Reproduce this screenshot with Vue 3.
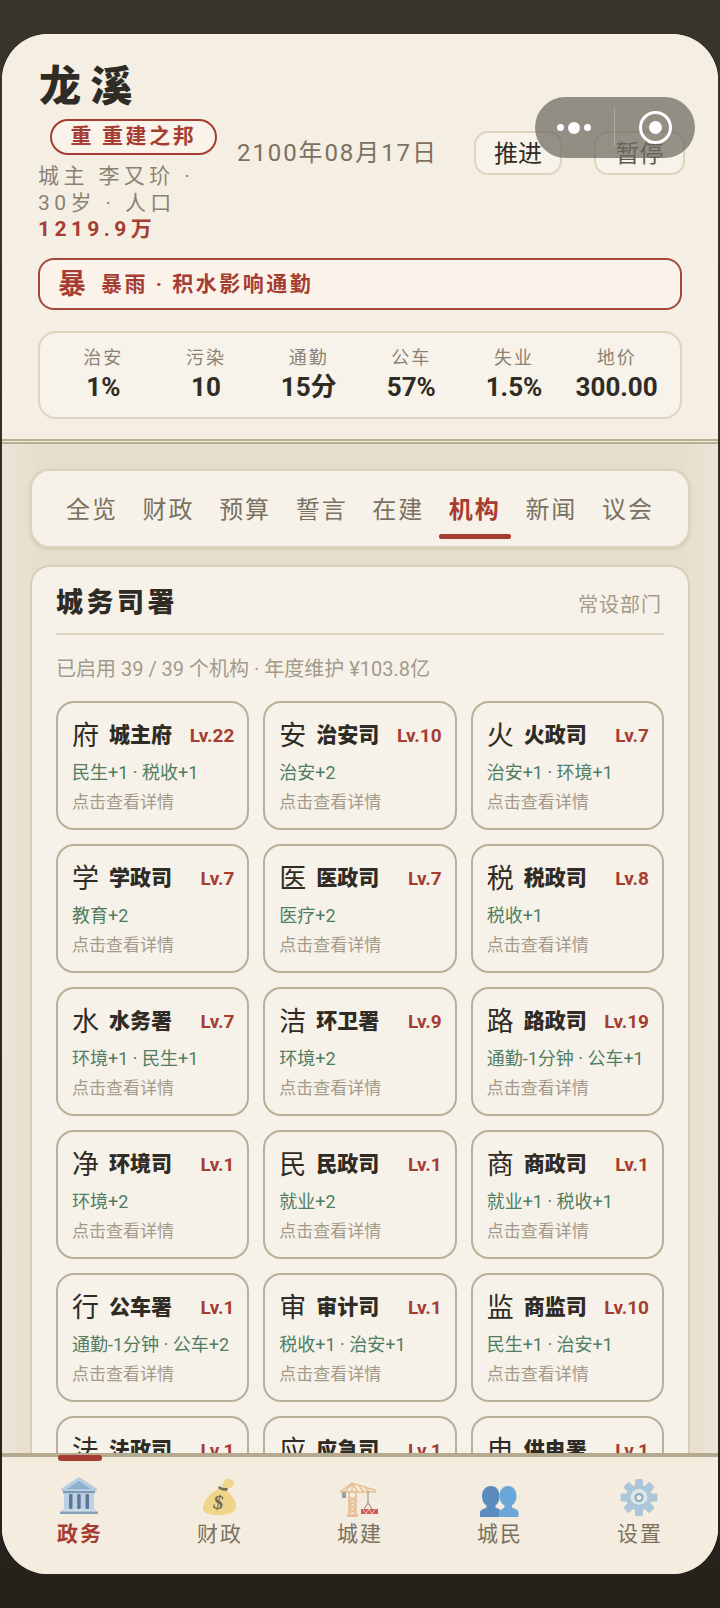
<script setup>
const stats = [
  ['治安', '1%'], ['污染', '10'], ['通勤', '15分'], ['公车', '57%'], ['失业', '1.5%'], ['地价', '300.00']
]
const tabs = ['全览', '财政', '预算', '誓言', '在建', '机构', '新闻', '议会']
const orgs = [
  ['府', '城主府', 'Lv.22', '民生+1 · 税收+1'],
  ['安', '治安司', 'Lv.10', '治安+2'],
  ['火', '火政司', 'Lv.7', '治安+1 · 环境+1'],
  ['学', '学政司', 'Lv.7', '教育+2'],
  ['医', '医政司', 'Lv.7', '医疗+2'],
  ['税', '税政司', 'Lv.8', '税收+1'],
  ['水', '水务署', 'Lv.7', '环境+1 · 民生+1'],
  ['洁', '环卫署', 'Lv.9', '环境+2'],
  ['路', '路政司', 'Lv.19', '通勤-1分钟 · 公车+1'],
  ['净', '环境司', 'Lv.1', '环境+2'],
  ['民', '民政司', 'Lv.1', '就业+2'],
  ['商', '商政司', 'Lv.1', '就业+1 · 税收+1'],
  ['行', '公车署', 'Lv.1', '通勤-1分钟 · 公车+2'],
  ['审', '审计司', 'Lv.1', '税收+1 · 治安+1'],
  ['监', '商监司', 'Lv.10', '民生+1 · 治安+1'],
  ['法', '法政司', 'Lv.1', ''],
  ['应', '应急司', 'Lv.1', ''],
  ['电', '供电署', 'Lv.1', '']
]
</script>

<template>
  <div class="page">
    <div class="frame">
      <header class="head">
        <h1 class="city">龙溪</h1>
        <div class="row2">
          <div class="left">
            <div class="pill">重 重建之邦</div>
            <div class="owner">城主 李又玠 ·</div>
            <div class="owner">30岁 · 人口</div>
            <div class="owner pop">1219.9万</div>
          </div>
          <div class="date">2100年08月17日</div>
          <button class="btn go">推进</button>
          <button class="btn pause">暂停</button>
        </div>
        <div class="alert"><span class="alert-mark">暴</span><span class="alert-text">暴雨 · 积水影响通勤</span></div>
        <div class="stats">
          <div v-for="s in stats" :key="s[0]" class="stat">
            <div class="stat-label">{{ s[0] }}</div>
            <div class="stat-value">{{ s[1] }}</div>
          </div>
        </div>
      </header>

      <main class="main">
        <nav class="tabs">
          <div v-for="t in tabs" :key="t" class="tab" :class="{ on: t === '机构' }">{{ t }}</div>
        </nav>
        <section class="panel">
          <div class="panel-head">
            <h2 class="panel-title">城务司署</h2>
            <span class="panel-note">常设部门</span>
          </div>
          <div class="summary">已启用 39 / 39 个机构 · 年度维护 ¥103.8亿</div>
          <div class="grid">
            <div v-for="o in orgs" :key="o[0]" class="org">
              <div class="org-head">
                <span class="org-mark">{{ o[0] }}</span>
                <span class="org-name">{{ o[1] }}</span>
                <span class="org-lv">{{ o[2] }}</span>
              </div>
              <template v-if="o[3]">
                <div class="org-effect">{{ o[3] }}</div>
                <div class="org-hint">点击查看详情</div>
              </template>
            </div>
          </div>
        </section>
      </main>

      <footer class="nav">
        <div class="nav-item active">
          <span class="nav-bar"></span>
          <svg class="ico" viewBox="0 0 40 40">
            <polygon points="20,0 38,12 38,14 2,14 2,12" fill="#b5cce3"/>
            <polygon points="20,4 32,12 8,12" fill="#8fadcd"/>
            <rect x="4" y="14" width="32" height="2.500" fill="#7f9ab6"/>
            <rect x="5" y="16.500" width="30" height="15.500" fill="#bcd1e6"/>
            <rect x="10" y="17" width="3.500" height="15" rx="1" fill="#5d7894"/>
            <rect x="18.200" y="17" width="3.500" height="15" rx="1" fill="#5d7894"/>
            <rect x="26.500" y="17" width="3.500" height="15" rx="1" fill="#5d7894"/>
            <rect x="3" y="32" width="34" height="2.500" fill="#cddcea"/>
            <rect x="1" y="34.500" width="38" height="2.500" fill="#86a1bc"/>
          </svg>
          <span class="nav-label">政务</span>
        </div>
        <div class="nav-item">
          <svg class="ico" viewBox="0 0 40 40">
            <path d="M22 11C12 14 4 24 4 31c0 5 6 7 15 7s18-2 18-8c0-8-7-16-15-19z" fill="#efd58a"/>
            <path d="M22 8c3-1 3-4 4-6 2 1 3 0 4-1 1 2 3 2 5 3-1 2 0 4-1 5-2 2-6 3-8 2z" fill="#efd58a"/>
            <path d="M20 9c3 2 6 2 9 2l-1 3c-4 0-7-1-9-3z" fill="#7b6a55"/>
            <text x="19.500" y="32" text-anchor="middle" class="dollar" transform="rotate(12 20 26)">$</text>
          </svg>
          <span class="nav-label">财政</span>
        </div>
        <div class="nav-item">
          <svg class="ico" viewBox="0 0 40 40">
            <g fill="none" stroke="#e6c092" stroke-width="1.500">
              <path d="M1 15L13 6l24 7.500M1 15h36M13 6v9M6 15l7-9M19 15l-6-9M25 15l-5-6M31 15l-5-4"/>
              <path d="M10 15h7v24h-7zM10 20l7 4-7 4 7 4-7 4M17 20l-7 4 7 4-7 4 7 4"/>
            </g>
            <rect x="8" y="37" width="11" height="3" fill="#e6c092"/>
            <rect x="3" y="15" width="4" height="6" fill="#94a0ad"/>
            <path d="M29 14v12" stroke="#a8a898" stroke-width="1.400"/>
            <path d="M29 26l-4 6M29 26l4 6" stroke="#a87a70" stroke-width="1"/>
            <rect x="22" y="32" width="17" height="5" fill="#cc5a55"/>
            <path d="M24 32l3 5 3-5 3 5 3-5" stroke="#eebdb0" stroke-width="1" fill="none"/>
          </svg>
          <span class="nav-label">城建</span>
        </div>
        <div class="nav-item">
          <svg class="ico" viewBox="0 0 40 40">
            <path d="M12 9c5.500 0 8.500 4.500 8.500 10 0 5-2 8-4 9.500v2c2 1 5 2 6 3.500V40H1v-5c0-2 4-3 6.500-4.500v-2C5 27 3 24 3 19c0-5.500 3.500-10 9-10z" fill="#5b8cbd"/>
            <path d="M29 9c5.500 0 8.500 4.500 8.500 10 0 5-2.500 8-4.500 9.500v2c2.500 1 6.500 2.500 6.500 4.500v5H20v-6l5.500-3.500v-2C23 27 20.500 24 20.500 19c0-5.500 3-10 8.500-10z" fill="#6ca7da"/>
          </svg>
          <span class="nav-label">城民</span>
        </div>
        <div class="nav-item">
          <svg class="ico" viewBox="0 0 40 40">
            <g fill="#adc6d9">
              <rect x="16" y="2" width="8" height="37" rx="1.500"/>
              <rect x="16" y="2" width="8" height="37" rx="1.500" transform="rotate(45 20 20.500)"/>
              <rect x="16" y="2" width="8" height="37" rx="1.500" transform="rotate(90 20 20.500)"/>
              <rect x="16" y="2" width="8" height="37" rx="1.500" transform="rotate(135 20 20.500)"/>
            </g>
            <circle cx="20" cy="20.500" r="13" fill="#adc6d9"/>
            <circle cx="20" cy="20.500" r="8.500" fill="#dde6ea"/>
            <path d="M12 23a8.500 8.500 0 0 0 16 0a9 9 0 0 1-16 0z" fill="#88a9c3"/>
            <circle cx="20" cy="20.500" r="4.500" fill="#8aa9c2"/>
            <circle cx="20" cy="20.500" r="2.500" fill="#f3ecdf"/>
          </svg>
          <span class="nav-label">设置</span>
        </div>
      </footer>
    </div>

    <div class="capsule">
      <span class="dots"><i class="d s"></i><i class="d"></i><i class="d s"></i></span>
      <span class="sep"></span>
      <span class="target"><i></i></span>
    </div>
  </div>
</template>

<style>
html, body { margin: 0; background: #2f2b24; }
</style>

<style scoped>
* { box-sizing: border-box; }
.page {
  position: relative;
  width: 720px;
  height: 1608px;
  padding: 34px 2px 34px;
  background: linear-gradient(180deg, #38332b 0%, #25211b 100%);
  font-family: Roboto, "Noto Sans CJK SC", sans-serif;
  color: #2f2b25;
}
.frame {
  height: 100%;
  border-radius: 46px;
  overflow: hidden;
  display: flex;
  flex-direction: column;
  background: #f5eee2;
}
.head {
  flex: none;
  padding: 28px 36px 20px 36px;
  border-bottom: 5px double #b9ad92;
  background: #f5eee2;
}
.city {
  margin: 3px 0 0 1px;
  font-size: 42px;
  line-height: 44px;
  font-weight: 900;
  letter-spacing: 9.500px;
  color: #2f2b25;
}
.row2 { display: flex; align-items: flex-start; margin-top: 10px; }
.left { flex: none; width: 199px; }
.pill {
  display: inline-block;
  margin-left: 12px;
  height: 36px;
  width: 167px;
  border: 2px solid #a63d33;
  border-radius: 18px;
  background: #faf3ea;
  color: #a63d33;
  font-size: 21px;
  line-height: 31px;
  font-weight: 700;
  letter-spacing: 2.600px;
  text-align: center;
}
.owner {
  font-size: 21px;
  line-height: 26.700px;
  letter-spacing: 4.400px;
  color: #8a8272;
  white-space: nowrap;
}
.pill + .owner { margin-top: 8px; }
.pop { color: #a63d33; font-weight: 700; }
.date {
  flex: 1;
  margin-top: 17px;
  font-size: 24px;
  line-height: 34px;
  letter-spacing: 1.900px;
  color: #7a7161;
  white-space: nowrap;
}
.btn {
  flex: none;
  height: 44px;
  margin-top: 12px;
  padding: 0 0 3px;
  border: 2px solid #ddd3bf;
  border-radius: 14px;
  background: #f8f3ea;
  font: inherit;
  font-size: 24px;
  color: #2f2b25;
}
.go { width: 88px; margin-right: 32px; }
.pause { width: 91px; margin-right: -3px; color: #5e574b; }
.alert {
  display: flex;
  align-items: center;
  height: 52px;
  margin-top: 15px;
  padding: 0 0 4px 18px;
  border: 2px solid #a8453c;
  border-radius: 16px;
  background: #fbf3ea;
  color: #a63d33;
  font-weight: 700;
}
.alert-mark { font-size: 28px; width: 43px; }
.alert-text { font-size: 21px; letter-spacing: 2.500px; }
.stats {
  display: grid;
  grid-template-columns: repeat(6, 1fr);
  height: 88px;
  margin-top: 21px;
  padding: 12px 12px 0;
  border: 2px solid #ddd4bf;
  border-radius: 18px;
  background: #f8f3ea;
}
.stat { text-align: center; }
.stat-label { font-size: 18px; line-height: 26px; letter-spacing: 2px; color: #8a8272; }
.stat-value { font-size: 26px; line-height: 32px; font-weight: 700; color: #2f2b25; }
.main {
  flex: 1;
  min-height: 0;
  overflow: hidden;
  padding: 25px 28px 0;
  background: linear-gradient(90deg, #ebe5d8 0%, #e6decd 5%, #e6decd 95%, #ebe5d8 100%);
}
.tabs {
  display: flex;
  justify-content: space-between;
  height: 79px;
  padding: 0 24px;
  border: 2px solid #ddd4c0;
  border-radius: 20px;
  background: #f7f2e9;
  box-shadow: 0 1px 3px rgba(120, 105, 80, .25);
}
.tab {
  position: relative;
  width: 72px;
  text-align: center;
  font-size: 24px;
  line-height: 78px;
  letter-spacing: 2px;
  color: #7a7161;
}
.tab.on { color: #a63d33; font-weight: 700; }
.tab.on::after {
  content: "";
  position: absolute;
  left: 0;
  right: 0;
  top: 63px;
  height: 5px;
  border-radius: 2px;
  background: #a63d33;
}
.panel {
  margin-top: 17px;
  height: 1000px;
  padding: 20px 24px 0;
  border: 2px solid #d8ceb9;
  border-bottom: 0;
  border-radius: 20px 20px 0 0;
  background: #f7f2e9;
}
.panel-head {
  display: flex;
  justify-content: space-between;
  align-items: center;
  padding: 0 2px 13px 0;
  border-bottom: 2px solid #ddd4c0;
}
.panel-title {
  margin: 0;
  font-size: 27px;
  line-height: 33px;
  font-weight: 900;
  letter-spacing: 3.500px;
  color: #2f2b25;
}
.panel-note { font-size: 20px; letter-spacing: 1px; color: #a39a88; }
.summary {
  margin-top: 20px;
  font-size: 20px;
  line-height: 28px;
  color: #a39a8a;
  white-space: nowrap;
}
.grid {
  display: grid;
  grid-template-columns: repeat(3, 1fr);
  gap: 14px;
  margin-top: 18px;
}
.org {
  height: 129px;
  padding: 13px 13px 0 14px;
  border: 2px solid #b9af98;
  border-radius: 18px;
  background: #f7f2e9;
}
.org-head { display: flex; align-items: center; height: 34px; }
.org-mark { flex: none; width: 37px; font-size: 27px; color: #2f2b25; }
.org-name { font-size: 21px; font-weight: 900; color: #2f2b25; white-space: nowrap; }
.org-lv { margin-left: auto; padding-top: 4px; font-size: 19px; font-weight: 700; color: #a63d33; }
.org-effect {
  margin-top: 11px;
  font-size: 18px;
  line-height: 24px;
  color: #4e7d62;
  white-space: nowrap;
}
.org-hint { margin-top: 5px; font-size: 17px; line-height: 24px; color: #a39a8a; }
.nav {
  flex: none;
  display: flex;
  height: 121px;
  padding: 0 7px;
  border-top: 4px solid #b5aa90;
  background: #f3ecdf;
}
.nav-item {
  position: relative;
  width: 140px;
  display: flex;
  flex-direction: column;
  align-items: center;
  padding-top: 20px;
}
.nav-bar {
  position: absolute;
  left: 49px;
  top: -2px;
  width: 44px;
  height: 6px;
  border-radius: 3px;
  background: #a63d33;
}
.ico { display: block; width: 40px; height: 40px; overflow: visible; }
.dollar { font: 700 20px "Liberation Serif", serif; fill: #75695a; }
.nav-label {
  margin-top: 3px;
  padding-left: 2px;
  font-size: 21px;
  line-height: 28px;
  letter-spacing: 2px;
  color: #7a7161;
}
.active .nav-label { color: #a63d33; font-weight: 700; }
.capsule {
  position: absolute;
  left: 535px;
  top: 97px;
  width: 160px;
  height: 61px;
  border-radius: 31px;
  background: rgba(110, 105, 95, .72);
}
.dots {
  position: absolute;
  left: 22px;
  top: 0;
  height: 61px;
  display: flex;
  align-items: center;
  gap: 4px;
}
.d { width: 12px; height: 12px; border-radius: 50%; background: #fff; }
.d.s { width: 7px; height: 7px; }
.sep {
  position: absolute;
  left: 79px;
  top: 11px;
  width: 1px;
  height: 38px;
  background: rgba(255, 255, 255, .25);
}
.target {
  position: absolute;
  left: 104px;
  top: 14px;
  width: 33px;
  height: 33px;
  border: 3px solid #fff;
  border-radius: 50%;
  display: flex;
  align-items: center;
  justify-content: center;
}
.target i { width: 13px; height: 13px; border-radius: 50%; background: #fff; }
</style>
